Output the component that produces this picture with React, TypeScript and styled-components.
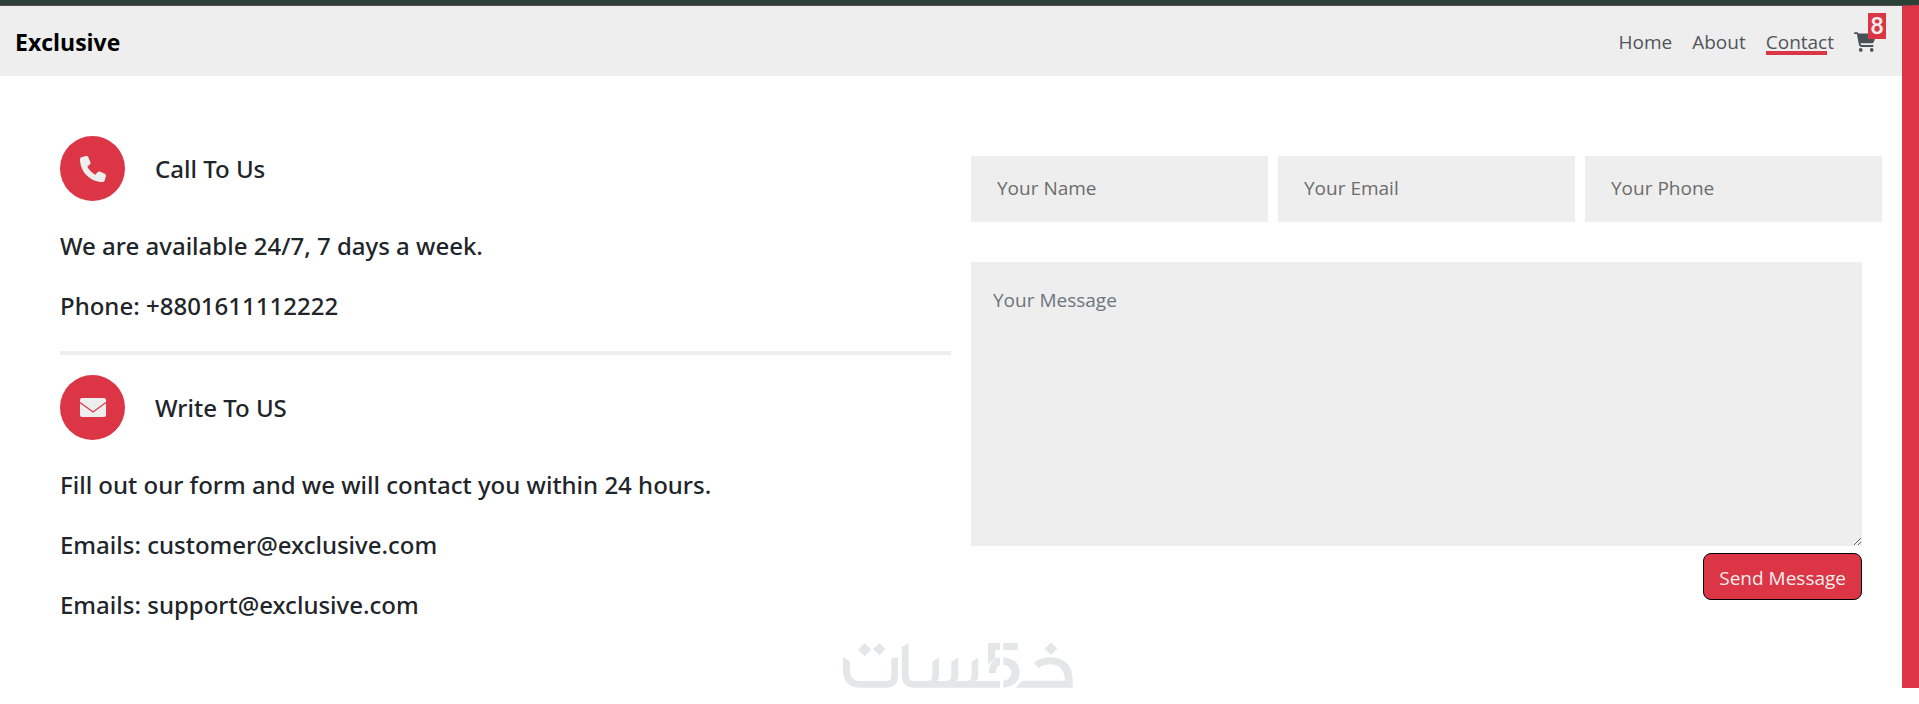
import React from 'react';
import styled, { createGlobalStyle } from 'styled-components';
import { FaCartShopping, FaPhone } from 'react-icons/fa6';

const red = '#dc3545';
const panel = '#eeeeee';

const GlobalStyle = createGlobalStyle`
  *, *::before, *::after { box-sizing: border-box; }
  body {
    margin: 0;
    background: #ffffff;
    color: #212529;
    font-family: 'Open Sans', 'Noto Sans', sans-serif;
    font-size: 19px;
    line-height: 30px;
  }
`;

const Page = styled.div`
  display: flex;
  flex-direction: column;
  min-height: 100vh;
  padding-bottom: 16px;
  border-top: 5px solid #2b4037;
`;

const Frame = styled.div`
  flex: 1;
  display: flex;
  flex-direction: column;
  border-top: 1px solid #5a4a50;
  border-right: 17px solid ${red};
`;

const Navbar = styled.header`
  display: flex;
  align-items: center;
  justify-content: space-between;
  height: 70px;
  padding: 2px 26px 0 15px;
  background: ${panel};
`;

const Brand = styled.a`
  color: #000000;
  font-size: 23px;
  font-weight: 700;
  text-decoration: none;
`;

const Nav = styled.nav`
  display: flex;
  align-items: center;
  gap: 20px;
`;

const NavLink = styled.a<{ $active?: boolean }>`
  position: relative;
  color: #515559;
  text-decoration: none;

  &::after {
    content: '';
    display: ${(p) => (p.$active ? 'block' : 'none')};
    position: absolute;
    left: 0;
    bottom: 2px;
    width: 90%;
    height: 4px;
    background: ${red};
  }
`;

const CartLink = styled.a`
  position: relative;
  display: flex;
  color: #495057;
`;

const Badge = styled.span`
  position: absolute;
  top: -18px;
  left: 14px;
  width: 18px;
  background: ${red};
  color: ${panel};
  font: 500 24px/26px Roboto, sans-serif;
  text-align: center;
`;

const Main = styled.main`
  flex: 1;
  display: grid;
  grid-template-columns: 1fr 1fr;
  align-items: start;
  gap: 20px;
  padding: 60px 40px 0 60px;
`;

const Block = styled.section`
  & + & {
    margin-top: 20px;
  }
`;

const BlockHead = styled.div`
  display: flex;
  align-items: center;
  gap: 30px;
  margin-bottom: 30px;
`;

const Disc = styled.span`
  display: grid;
  place-items: center;
  width: 65px;
  height: 65px;
  border-radius: 50%;
  background: ${red};
  color: ${panel};
`;

const Title = styled.h2`
  margin: 0;
  font-family: 'Noto Sans', sans-serif;
  font-size: 24px;
  font-weight: 500;
`;

const Line = styled.p`
  margin: 0 0 30px;
  font-family: 'Noto Sans', sans-serif;
  font-size: 24px;
  font-weight: 500;

  &:last-child {
    margin-bottom: 0;
  }
`;

const Divider = styled.hr`
  height: 4px;
  margin: 0;
  border: 0;
  background: #eceef0;
`;

const Form = styled.form`
  display: flex;
  flex-direction: column;
  align-items: flex-end;
  padding-top: 20px;
`;

const FieldRow = styled.div`
  align-self: stretch;
  display: grid;
  grid-template-columns: repeat(3, 1fr);
  gap: 10px;
  margin: 0 -20px 40px 0;
`;

const Field = styled.input`
  min-width: 0;
  height: 66px;
  padding: 0 26px 2px;
  border: 0;
  border-radius: 0;
  background: ${panel};
  font: inherit;

  &::placeholder {
    color: #6c6c6c;
    opacity: 1;
  }
`;

const Message = styled.textarea`
  align-self: stretch;
  height: 284px;
  padding: 23px 22px;
  border: 0;
  background: ${panel};
  font: inherit;
  resize: both;

  &::placeholder {
    color: #6c757d;
    opacity: 1;
  }
`;

const SendButton = styled.button`
  height: 47px;
  margin-top: 7px;
  padding: 2px 15px 0;
  border: 1px solid #000000;
  border-radius: 8px;
  background: ${red};
  color: ${panel};
  font: inherit;
`;

const Mark = styled.svg`
  display: block;
  align-self: center;
  flex: none;
  margin-right: -15px;
`;

const EnvelopeIcon = () => (
  <svg width="26" height="22" viewBox="0 0 26 22" aria-hidden="true">
    <rect y="1" width="26" height="19" rx="2" fill="currentColor" />
    <path d="M0 5.5 L13 15 L26 5.5" fill="none" stroke={red} strokeWidth="1.2" />
  </svg>
);

const Watermark = () => (
  <Mark width="232" height="45" viewBox="0 0 696 135" fill="#e5e6e7" aria-hidden="true">
    <path d="M65 0 L85 20 L65 40 L45 20 Z M109 0 L128 18 L109 37 L90 18 Z" />
    <path d="M0 43 L21 55 V80 Q21 114 52 114 H130 Q145 114 145 98 V44 H165 V98 Q165 134 130 134 H55 Q0 134 0 80 Z" />
    <path d="M176 13 L197 0 V95 Q197 114 215 114 H250 Q268 114 268 95 V57 L288 43 V95 Q288 108 282 114 H307 Q325 114 325 95 V57 L346 43 V95 Q346 108 340 114 H368 Q386 114 386 95 V57 L406 43 V95 Q406 108 400 114 H471 V134 H215 Q176 134 176 95 Z" />
    <path d="M435 0 H471 V21 H457 V48 Q443 54 435 64 Z M481 0 H524 V21 H481 Z" />
    <path d="M437 90 Q440 48 471 43 V65 Q459 68 459 90 Z M481 43 Q530 48 530 88 Q528 130 481 134 V113 Q505 110 505 88 Q505 68 481 65 Z" />
    <path d="M624 -2 L643 17 L624 36 L605 17 Z M518 134 L538 113 H666 Q664 64 622 64 Q600 64 587 76 L573 60 Q592 43 622 43 Q689 46 689 113 V134 Z" />
  </Mark>
);

const App = () => (
  <>
    <GlobalStyle />
    <Page>
      <Frame>
        <Navbar>
          <Brand href="#">Exclusive</Brand>
          <Nav>
            <NavLink href="#home">Home</NavLink>
            <NavLink href="#about">About</NavLink>
            <NavLink href="#contact" $active>Contact</NavLink>
            <CartLink href="#cart" aria-label="Cart">
              <FaCartShopping size={22} />
              <Badge>8</Badge>
            </CartLink>
          </Nav>
        </Navbar>
        <Main>
          <div>
            <Block>
              <BlockHead>
                <Disc><FaPhone size={26} /></Disc>
                <Title>Call To Us</Title>
              </BlockHead>
              <Line>We are available 24/7, 7 days a week.</Line>
              <Line>Phone: +8801611112222</Line>
              <Divider />
            </Block>
            <Block>
              <BlockHead>
                <Disc><EnvelopeIcon /></Disc>
                <Title>Write To US</Title>
              </BlockHead>
              <Line>Fill out our form and we will contact you within 24 hours.</Line>
              <Line>Emails: customer@exclusive.com</Line>
              <Line>Emails: support@exclusive.com</Line>
            </Block>
          </div>
          <Form>
            <FieldRow>
              <Field type="text" aria-label="Your Name" placeholder="Your Name" />
              <Field type="email" aria-label="Your Email" placeholder="Your Email" />
              <Field type="tel" aria-label="Your Phone" placeholder="Your Phone" />
            </FieldRow>
            <Message aria-label="Your Message" placeholder="Your Message" />
            <SendButton type="button">Send Message</SendButton>
          </Form>
        </Main>
        <Watermark />
      </Frame>
    </Page>
  </>
);

export default App;
